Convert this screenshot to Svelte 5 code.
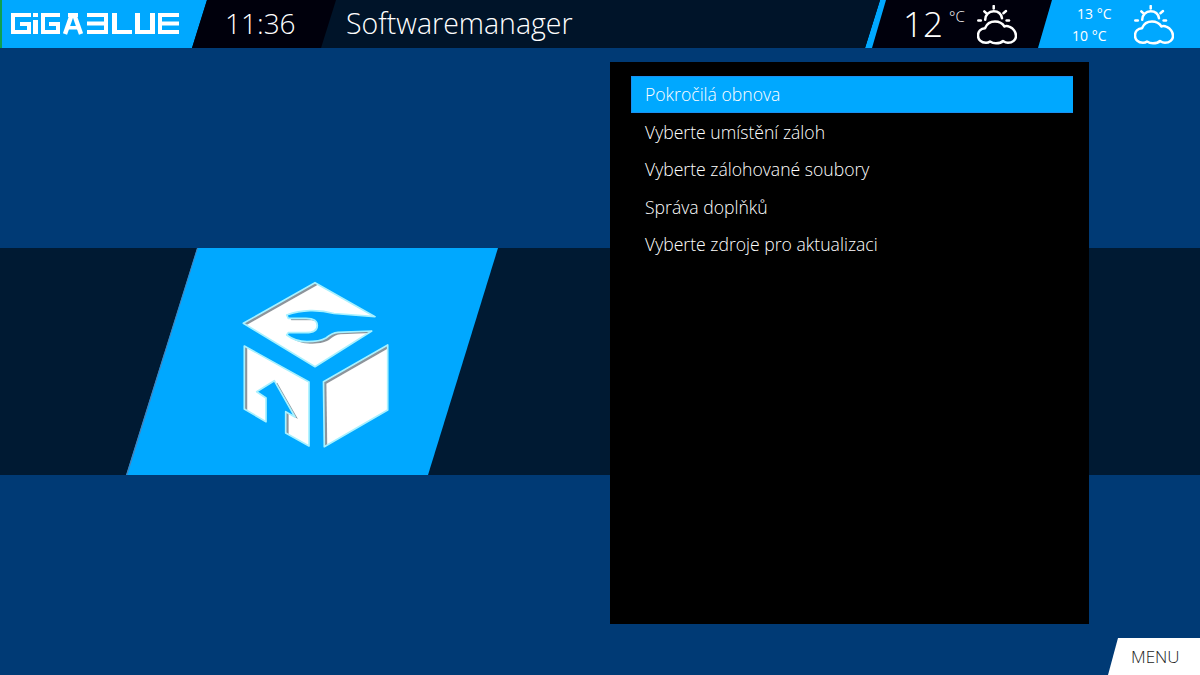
<script>
  const menu = ['Pokročilá obnova', 'Vyberte umístění záloh', 'Vyberte zálohované soubory', 'Správa doplňků', 'Vyberte zdroje pro aktualizaci'];
  const logoBars = [
    [11,13,20,4],[11,13,4,21],[11,30,20,4],[27,22,4,12],[20,22,11,4],
    [33,13,5,4],[33,20,5,14],
    [41,13,19,4],[41,13,4,21],[41,30,19,4],[56,22,4,12],[49,22,11,4],
    [68,13,10,4],[67,26,12,3.5],
    [87,13,21,4],[87,21.5,21,4],[87,30,21,4],[104,13,4,21],
    [112,13,5,21],[112,30,20,4],
    [135,13,5,21],[150,13,5,21],[135,30,20,4],
    [158,13,21,4],[158,21.5,21,4],[158,30,21,4],[158,13,4,21]
  ];
  const faces = [
    'M315 282.7L375 316.7L334 313.5C325 311 318 310.5 310 310.7C302 311 294 312.5 286.7 315L288.3 318.3L306 318.3C313 318.3 317.3 321 317.3 325.5C317.3 330 313 332.7 306 332.7L288.3 332.7L286.7 335C292 339 300 341.7 307 341.7C315 341.7 321 341 326 338C330 334.5 333 332.6 338 332.3L371.7 331L315 366.7L243.3 323.3Z',
    'M244.3 346L309 382V446L285.7 433V411.7L295 417L274.3 380.7L256.7 391.7L266 398V421.7L244.3 409Z',
    'M323.5 381.7L387.7 345V410L324.3 446.7Z'
  ];
</script>

{#snippet weather()}
  <svg class="wx" viewBox="0 0 40 40" fill="none" stroke="#fff" stroke-width="2.5" stroke-linecap="round" stroke-linejoin="round">
    <path d="M8.2 14.8C8.2 10 12 6.2 16.7 6.2C21 6.2 24.2 9 25 13.2" />
    <path d="M9 37.8C4 37.8 1 34.5 1 30.5C1 26.5 4 23.5 8 23.2C9.5 19.5 13 16.5 18 16.5C22.5 16.5 25.5 18.5 27.5 21.5C29 20.5 31 21 33 22C36 23 39 27 39 31C39 35 35.5 37.8 31 37.8C29 37.8 27.5 37 26 36C24 38 21 38.3 19 38.3C16.5 38.3 14.5 37.5 13 36.5C12 37.3 10.5 37.8 9 37.8Z" />
    <line x1="16.7" y1="1" x2="16.7" y2="3.6" />
    <line x1="7.3" y1="6.3" x2="9.2" y2="8.2" />
    <line x1="29" y1="6" x2="26.4" y2="8.2" />
    <line x1="1.3" y1="15.5" x2="3.8" y2="15.5" />
    <line x1="29.6" y1="15.5" x2="32" y2="15.5" />
  </svg>
{/snippet}

<div class="page">
  <header>
    <div class="logo">
      <svg viewBox="0 0 190 48" width="190" height="48" fill="#fff" role="img" aria-label="GigaBlue">
        {#each logoBars as b}
          <rect x={b[0]} y={b[1]} width={b[2]} height={b[3]} />
        {/each}
        <line x1="65" y1="34" x2="72" y2="14" stroke="#fff" stroke-width="4.4" />
        <line x1="81" y1="34" x2="74" y2="14" stroke="#fff" stroke-width="4.4" />
      </svg>
    </div>
    <div class="clock">11:36</div>
    <div class="title">Softwaremanager</div>
    <div class="now">
      <span class="big">12</span><span class="unit">°C</span>
      {@render weather()}
    </div>
    <div class="fore">
      <div class="temps"><span class="hi">13 °C</span><span class="lo">10 °C</span></div>
      {@render weather()}
    </div>
  </header>

  <main>
    <div class="band">
      <div class="plate">
        <svg class="cube" viewBox="240 280 152 170" width="152" height="170">
          <defs>
            <filter id="inset" x="-10%" y="-10%" width="120%" height="120%">
              <feOffset in="SourceAlpha" dx="2.6" dy="2.2" result="off" />
              <feGaussianBlur in="off" stdDeviation="0.5" result="blur" />
              <feComposite in="SourceAlpha" in2="blur" operator="out" result="edge" />
              <feFlood flood-color="#8c949b" />
              <feComposite in2="edge" operator="in" result="shade" />
              <feMerge><feMergeNode in="SourceGraphic" /><feMergeNode in="shade" /></feMerge>
            </filter>
          </defs>
          <g fill="#fff" filter="url(#inset)">
            {#each faces as d}<path {d} />{/each}
          </g>
          <g fill="none" stroke="#a8f1ff" stroke-width="1.7" stroke-linejoin="round">
            {#each faces as d}<path {d} />{/each}
          </g>
        </svg>
      </div>
    </div>

    <section class="panel">
      {#each menu as item, i}
        <div class="row" class:sel={i === 0}>{item}</div>
      {/each}
    </section>

    <div class="menu-btn">MENU</div>
  </main>
</div>

<style>
  :global(body) { margin: 0; background: #003a75; }
  .page {
    width: 1200px;
    height: 675px;
    overflow: hidden;
    display: flex;
    flex-direction: column;
    font-family: "Open Sans", "Noto Sans", sans-serif;
    font-weight: 300;
    color: #fff;
    background: #003a75;
  }
  header {
    flex: 0 0 48px;
    display: flex;
    background: #001429;
  }
  header > div { height: 48px; display: flex; align-items: center; box-sizing: border-box; }
  .logo {
    flex: 0 0 207px;
    background: #00a8ff;
    border-left: 2px solid #0fa04f;
    clip-path: polygon(0 0, 100% 0, 192px 100%, 0 100%);
  }
  .logo svg { margin-left: -2px; flex: none; display: block; }
  .clock {
    flex: 0 0 144px;
    margin-left: -15px;
    padding: 0 0 2px 33px;
    background: #00000c;
    clip-path: polygon(15px 0, 100% 0, 129px 100%, 0 100%);
    font-size: 28px;
  }
  .title {
    flex: 1;
    padding: 0 0 3px 10px;
    font-size: 28.5px;
  }
  .now {
    flex: 0 0 187px;
    padding-left: 38px;
    background: #00000c;
    clip-path: polygon(15px 0, 100% 0, calc(100% - 14px) 100%, 0 100%);
    position: relative;
  }
  .now::before {
    content: "";
    position: absolute;
    inset: 0 auto 0 0;
    width: 22px;
    background: #00a8ff;
    clip-path: polygon(15px 0, 21px 0, 7px 100%, 0 100%);
  }
  .big { font-size: 35px; line-height: 38px; }
  .unit { font-size: 15px; margin: -17px 0 0 6px; }
  .now .wx { margin-left: 12px; }
  .fore {
    flex: 0 0 162px;
    margin-left: -14px;
    background: #00a8ff;
    clip-path: polygon(14px 0, 100% 0, 100% 100%, 0 100%);
    font-weight: 400;
    padding-left: 34px;
  }
  .temps { display: flex; flex-direction: column; width: 62px; font-size: 14px; line-height: 22px; margin-top: 1px; }
  .hi { margin-left: 5px; }
  .wx { width: 40px; height: 40px; flex: none; display: block; margin-top: 2px; }

  main {
    flex: 1;
    display: grid;
    grid-template-rows: 200px 227px 1fr;
    grid-template-columns: 1fr;
  }
  .band {
    grid-row: 2;
    grid-column: 1;
    background: #001a33;
    display: flex;
  }
  .plate {
    margin-left: 126px;
    width: 372px;
    height: 227px;
    background: #00a8ff;
    clip-path: polygon(71px 0, 100% 0, 302px 100%, 0 100%);
    box-sizing: border-box;
    padding: 32px 0 0 114px;
    position: relative;
  }
  .plate::before {
    content: "";
    position: absolute;
    inset: 0 auto 0 0;
    width: 72px;
    background: #4d7fb3;
    clip-path: polygon(71px 0, 72px 0, 1.4px 100%, 0 100%);
  }
  .cube { display: block; position: relative; }
  .panel {
    grid-row: 1 / -1;
    grid-column: 1;
    justify-self: start;
    align-self: start;
    margin: 14px 0 0 610px;
    width: 479px;
    height: 562px;
    box-sizing: border-box;
    padding: 14px 16px 0 21px;
    background: #000;
    z-index: 1;
    font-size: 17.6px;
  }
  .row {
    height: 37.6px;
    line-height: 36.6px;
    padding-left: 14px;
    color: #fff;
  }
  .sel {
    height: 37px;
    margin-bottom: 0.6px;
    background: #00a8ff;
    color: #fff;
    box-sizing: border-box;
    border: 1px solid #1a8ff0;
    border-width: 1px 0 1px 1px;
    padding-left: 13px;
    line-height: 35px;
  }
  .menu-btn {
    grid-row: 1 / -1;
    grid-column: 1;
    justify-self: end;
    align-self: end;
    width: 92px;
    height: 37px;
    box-sizing: border-box;
    background: #fff;
    color: #1a1a1a;
    clip-path: polygon(10px 0, 100% 0, 100% 100%, 0 100%);
    font-size: 17px;
    line-height: 38px;
    padding-left: 23px;
    z-index: 1;
  }
</style>
